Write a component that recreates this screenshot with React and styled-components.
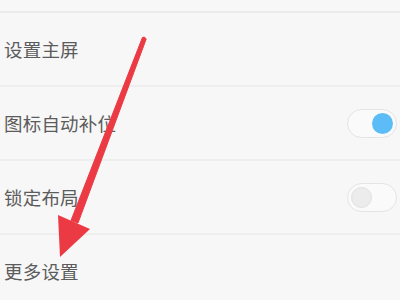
import styled, { createGlobalStyle } from "styled-components";

const GlobalStyle = createGlobalStyle`
  html, body {
    margin: 0;
    padding: 0;
    background: #f7f7f7;
    overflow: hidden;
  }
`;

const Screen = styled.div`
  position: relative;
  width: 400px;
  height: 300px;
  overflow: hidden;
  background: #f7f7f7;
  font-family: "Noto Sans CJK SC", "Noto Sans", sans-serif;
`;

const List = styled.div`
  display: flex;
  flex-direction: column;
`;

const TopEdge = styled.div`
  height: 11px;
  border-bottom: 2px solid #ebebeb;
`;

const Row = styled.div`
  display: flex;
  align-items: center;
  justify-content: space-between;
  height: 72px;
  padding: 0 3px 0 4px;
  border-bottom: 2px solid #eeeeee;
`;

const Label = styled.span`
  font-size: 18.5px;
  color: #5c5c5c;
  letter-spacing: 0.2px;
`;

const Switch = styled.div`
  box-sizing: border-box;
  width: 50px;
  height: 29px;
  border-radius: 15px;
  border: 1.5px solid #e4e4e4;
  background: #fafafa;
  display: flex;
  align-items: center;
  justify-content: ${(p) => (p.$on ? "flex-end" : "flex-start")};
  padding: 0 3px;
`;

const Knob = styled.div`
  width: 21px;
  height: 21px;
  border-radius: 50%;
  background: ${(p) => (p.$on ? "#5bbcf8" : "#ececec")};
  border: ${(p) => (p.$on ? "none" : "1px solid #e0e0e0")};
  box-sizing: border-box;
`;

const ArrowLayer = styled.svg`
  position: absolute;
  left: 0;
  top: 0;
  pointer-events: none;
`;

const rows = [
  { label: "设置主屏" },
  { label: "图标自动补位", toggle: true, on: true },
  { label: "锁定布局", toggle: true, on: false },
  { label: "更多设置" },
];

export default function App() {
  return (
    <Screen>
      <GlobalStyle />
      <List>
        <TopEdge />
        {rows.map((r) => (
          <Row key={r.label}>
            <Label>{r.label}</Label>
            {r.toggle && (
              <Switch $on={r.on}>
                <Knob $on={r.on} />
              </Switch>
            )}
          </Row>
        ))}
      </List>
      <ArrowLayer width="400" height="300" viewBox="0 0 400 300">
        <path
          d="M142.4 37.6 Q144.4 35.8 146.2 39 L78 223 L71 220.5 Z"
          fill="#ec3a44"
          stroke="#ec3a44"
          strokeWidth="1"
          strokeLinejoin="round"
        />
        <path d="M58 215 L90 229 L60 257 Z" fill="#ec3a44" />
      </ArrowLayer>
    </Screen>
  );
}
